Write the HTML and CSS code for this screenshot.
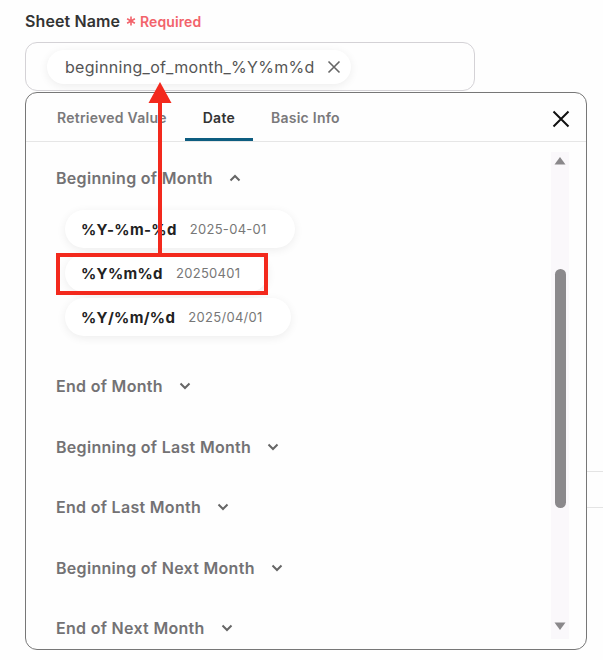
FILE: index.html
```html
<!DOCTYPE html>
<html lang="en">
<head>
    <meta charset="UTF-8">
    <meta name="viewport" content="width=device-width, initial-scale=1.0">
    <title>Sheet Name</title>
    <link rel="stylesheet" href="styles.css">
</head>
<body>
    <div class="page">
        <div class="field-label">
            <span class="label-text">Sheet Name</span>
            <span class="required">
                <svg width="10" height="10" viewBox="0 0 10 10"><path d="M5 0.5V9.5M1.1 2.75L8.9 7.25M8.9 2.75L1.1 7.25" stroke="#f2636b" stroke-width="1.6"/></svg>
                Required
            </span>
        </div>

        <div class="input-box">
            <div class="value-chip">
                <span>beginning_of_month_%Y%m%d</span>
                <svg width="14" height="14" viewBox="0 0 14 14"><path d="M1.5 1.5L12.5 12.5M12.5 1.5L1.5 12.5" stroke="#666" stroke-width="1.6"/></svg>
            </div>
        </div>

        <div class="backdrop-lines"></div>

        <div class="panel">
            <div class="tabs">
                <div class="tab">Retrieved Value</div>
                <div class="tab active">Date</div>
                <div class="tab">Basic Info</div>
                <button class="close-btn">
                    <svg width="18" height="18" viewBox="0 0 18 18"><path d="M1.5 1.5L16.5 16.5M16.5 1.5L1.5 16.5" stroke="#111" stroke-width="2"/></svg>
                </button>
            </div>

            <div class="panel-body">
                <div class="list">
                    <div class="group-head">
                        Beginning of Month
                        <svg class="chev" width="12" height="8" viewBox="0 0 12 8"><path d="M1.5 6.5L6 2L10.5 6.5" stroke="#666" stroke-width="2" fill="none"/></svg>
                    </div>
                    <div class="options">
                        <div class="option"><b>%Y-%m-%d</b><span>2025-04-01</span></div>
                        <div class="option"><b>%Y%m%d</b><span>20250401</span></div>
                        <div class="option"><b>%Y/%m/%d</b><span>2025/04/01</span></div>
                    </div>
                    <div class="group-head spaced">
                        End of Month
                        <svg class="chev" width="12" height="8" viewBox="0 0 12 8"><path d="M1.5 1.5L6 6L10.5 1.5" stroke="#666" stroke-width="2" fill="none"/></svg>
                    </div>
                    <div class="group-head">
                        Beginning of Last Month
                        <svg class="chev" width="12" height="8" viewBox="0 0 12 8"><path d="M1.5 1.5L6 6L10.5 1.5" stroke="#666" stroke-width="2" fill="none"/></svg>
                    </div>
                    <div class="group-head">
                        End of Last Month
                        <svg class="chev" width="12" height="8" viewBox="0 0 12 8"><path d="M1.5 1.5L6 6L10.5 1.5" stroke="#666" stroke-width="2" fill="none"/></svg>
                    </div>
                    <div class="group-head">
                        Beginning of Next Month
                        <svg class="chev" width="12" height="8" viewBox="0 0 12 8"><path d="M1.5 1.5L6 6L10.5 1.5" stroke="#666" stroke-width="2" fill="none"/></svg>
                    </div>
                    <div class="group-head">
                        End of Next Month
                        <svg class="chev" width="12" height="8" viewBox="0 0 12 8"><path d="M1.5 1.5L6 6L10.5 1.5" stroke="#666" stroke-width="2" fill="none"/></svg>
                    </div>
                </div>

                <div class="scrollbar">
                    <svg width="12" height="9" viewBox="0 0 12 9"><path d="M6 1L11.5 8.5H0.5Z" fill="#8a888b"/></svg>
                    <div class="track">
                        <div class="thumb" style="margin-top: 104px; height: 239px;"></div>
                    </div>
                    <svg width="12" height="9" viewBox="0 0 12 9"><path d="M6 8L11.5 0.5H0.5Z" fill="#8a888b"/></svg>
                </div>
            </div>
        </div>

        <!-- annotation overlay -->
        <div class="highlight-box"></div>
        <svg class="arrow" width="26" height="175" viewBox="0 0 26 175">
            <path d="M13 0L24.5 21H1.5Z" fill="#f3291d"/>
            <rect x="11" y="20" width="4" height="155" fill="#f3291d"/>
        </svg>
    </div>
</body>
</html>
```

FILE: styles.css
```css
body {
    margin: 0;
    background-color: #fefefe;
    font-family: Inter, "Noto Sans", sans-serif;
    color: #333;
}

.page {
    position: relative;
    width: 603px;
    height: 660px;
    overflow: hidden;
    padding-left: 25px;
    box-sizing: border-box;
}

.field-label {
    display: flex;
    align-items: center;
    gap: 6px;
    padding-top: 11px;
    height: 20px;
}

.label-text {
    font-size: 16px;
    font-weight: 600;
    letter-spacing: 0.1px;
    color: #333;
}

.required {
    display: flex;
    align-items: center;
    gap: 4px;
    font-size: 14px;
    font-weight: 600;
    letter-spacing: 0.1px;
    color: #f2636b;
}

.input-box {
    margin-top: 11px;
    width: 450px;
    height: 49px;
    border: 1px solid #d4d2d6;
    border-radius: 12px;
    box-sizing: border-box;
    display: flex;
    align-items: center;
    padding-left: 21px;
}

.value-chip {
    display: flex;
    align-items: center;
    gap: 12px;
    height: 34px;
    padding: 0 10px 0 18px;
    border-radius: 17px;
    background-color: #fff;
    box-shadow: 0 2px 10px rgba(0, 0, 0, 0.07);
    font-size: 16px;
    letter-spacing: 0.3px;
    color: #555;
}

.backdrop-lines {
    position: absolute;
    left: 587px;
    top: 471px;
    width: 16px;
    height: 35px;
    border-top: 1px solid #e4e4e4;
    border-bottom: 1px solid #e4e4e4;
}

.panel {
    margin-top: 1px;
    width: 562px;
    height: 558px;
    border: 1px solid #777;
    border-radius: 12px;
    box-sizing: border-box;
    background-color: #fefefe;
    overflow: hidden;
    display: flex;
    flex-direction: column;
}

.tabs {
    display: flex;
    align-items: stretch;
    height: 49px;
    padding-left: 13px;
    border-bottom: 1px solid #e6e6e6;
    box-sizing: border-box;
    flex-shrink: 0;
}

.tab {
    display: flex;
    align-items: center;
    padding: 4px 18px 0;
    font-size: 14px;
    font-weight: 600;
    letter-spacing: 0.25px;
    color: #7a797b;
    border-bottom: 3px solid transparent;
}

.tab.active {
    color: #333;
    border-bottom: 3px solid #0d5d80;
    border-radius: 3px 3px 0 0;
}

.close-btn {
    margin-left: auto;
    margin-right: 16px;
    align-self: center;
    margin-top: 4px;
    background: none;
    border: none;
    padding: 0;
    display: flex;
}

.panel-body {
    flex: 1;
    display: flex;
    min-height: 0;
}

.list {
    flex: 1;
    padding: 6px 0 0 30px;
}

.group-head {
    display: flex;
    align-items: center;
    gap: 16px;
    height: 60.5px;
    font-size: 16px;
    font-weight: 600;
    letter-spacing: 0.3px;
    color: #737274;
}

.group-head.spaced {
    margin-top: 20px;
}

.options {
    display: flex;
    flex-direction: column;
    align-items: flex-start;
    gap: 6px;
    margin-top: 1.5px;
    padding-left: 9px;
}

.option {
    display: flex;
    align-items: center;
    gap: 13px;
    height: 38px;
    padding: 0 28px 0 16px;
    border-radius: 19px;
    background-color: #fff;
    box-shadow: 0 2px 10px rgba(0, 0, 0, 0.07);
}

.option b {
    font-size: 15px;
    font-weight: 700;
    letter-spacing: 0.35px;
    color: #222;
}

.option span {
    font-size: 13px;
    letter-spacing: 0.3px;
    color: #777;
}

.scrollbar {
    width: 18px;
    margin: 10px 17px 10px 0;
    background-color: #faf8fb;
    display: flex;
    flex-direction: column;
    align-items: center;
    padding: 4px 0 8px;
    box-sizing: border-box;
}

.track {
    flex: 1;
    width: 100%;
    display: flex;
    justify-content: center;
}

.thumb {
    width: 11px;
    border-radius: 6px;
    background-color: #8b898c;
}

.highlight-box {
    position: absolute;
    left: 56px;
    top: 253px;
    width: 212px;
    height: 42px;
    border: 4px solid #f3291d;
    box-sizing: border-box;
}

.arrow {
    position: absolute;
    left: 147px;
    top: 82px;
}
```
